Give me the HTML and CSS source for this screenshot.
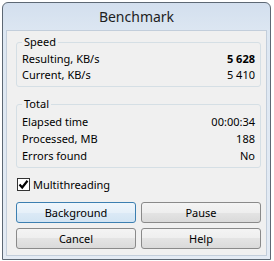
FILE: index.html
```html
<!DOCTYPE html>
<html>
<head>
  <title>Benchmark</title>
  <link rel="stylesheet" href="styles.css">
</head>
<body>
  <div class="window">
    <div class="titlebar">Benchmark</div>
    <div class="client">
      <fieldset class="group">
        <legend>Speed</legend>
        <div class="row"><span>Resulting, KB/s</span><b>5 628</b></div>
        <div class="row"><span>Current, KB/s</span><span>5 410</span></div>
      </fieldset>
      <fieldset class="group total">
        <legend>Total</legend>
        <div class="row"><span>Elapsed time</span><span>00:00:34</span></div>
        <div class="row"><span>Processed, MB</span><span>188</span></div>
        <div class="row"><span>Errors found</span><span>No</span></div>
      </fieldset>
      <label class="check">
        <span class="box">
          <svg width="11" height="11" viewBox="0 0 11 11"><path d="M1.5 5.5 L4.2 8.5 L9.5 1.8" fill="none" stroke="#000" stroke-width="2.2"/></svg>
        </span>
        Multithreading
      </label>
      <div class="buttons">
        <button class="default">Background</button>
        <button>Pause</button>
        <button>Cancel</button>
        <button>Help</button>
      </div>
    </div>
  </div>
</body>
</html>
```
FILE: styles.css
```css
body { margin: 0; background: #fff; font-family: "Noto Sans", sans-serif; font-size: 11px; color: #000; }
.window {
  margin: 2px 0 0 2px;
  width: 269px;
  height: 258px;
  box-sizing: border-box;
  border: 1px solid #5d6874;
  border-radius: 6px 6px 0 0;
  background: linear-gradient(#d3dfee, #dde7f2 30px, #e4ebf4);
  display: flex;
  flex-direction: column;
}
.titlebar {
  height: 27px;
  line-height: 27px;
  text-align: center;
  font-size: 14px;
  color: #1e1e1e;
}
.client {
  flex: 1;
  margin: 0 3px 3px 3px;
  border: 1px solid #c3cedb;
  background: #f0f0f0;
  padding: 3px 5px 0 9px;
}
.group {
  margin: 0;
  border: 1px solid #d5dfe5;
  border-radius: 3px;
  padding: 1px 5px 3px 5px;
}
.group legend { padding: 0 2px; line-height: 16px; }
.total { margin-top: 9px; }
.row { display: flex; justify-content: space-between; line-height: 16px; }
.total .row { line-height: 17px; }
.check {
  display: flex;
  align-items: center;
  gap: 3px;
  margin: 10px 0 0 1px;
  height: 13px;
}
.box {
  width: 11px;
  height: 11px;
  border: 1px solid #333;
  background: #fff;
  display: flex;
}
.buttons {
  display: grid;
  grid-template-columns: 1fr 1fr;
  gap: 5px 5px;
  margin-top: 11px;
}
button {
  font-family: "Noto Sans", sans-serif;
  font-size: 11px;
  height: 21px;
  padding: 0;
  border: 1px solid #8a8a8a;
  border-radius: 3px;
  background: linear-gradient(#f4f4f4, #eeeeee 50%, #e4e4e4 50%, #dadada);
  color: #000;
}
button.default {
  border-color: #3c7fb1;
  background: linear-gradient(#eff6fc, #e6f0f9 50%, #dceaf6 50%, #d2e4f3);
}
```
